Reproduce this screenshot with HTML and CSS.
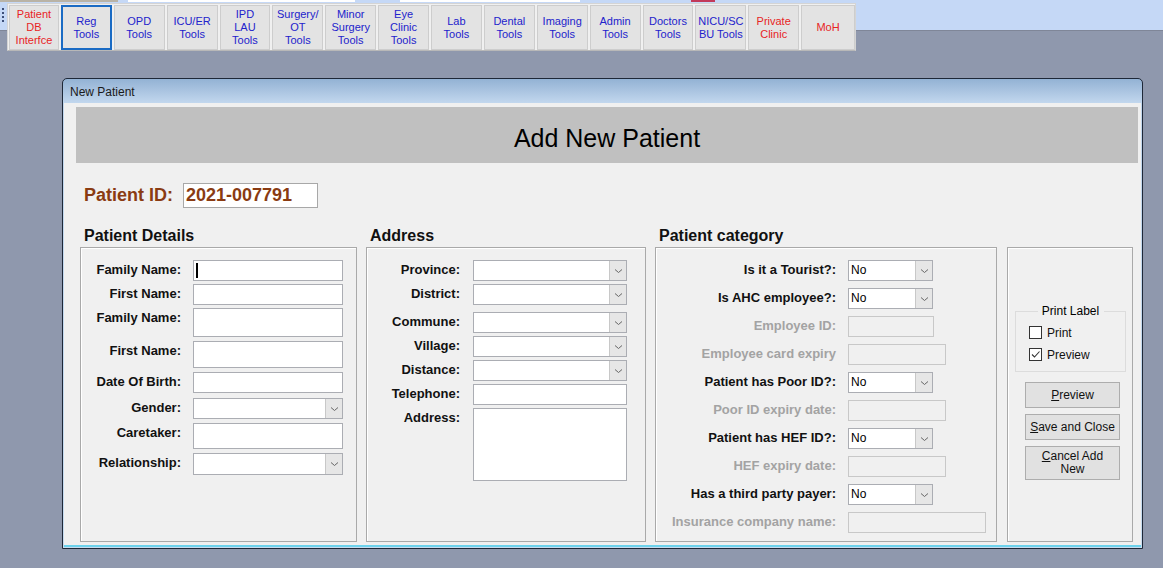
FILE: index.html
```html
<!DOCTYPE html>
<html>
<head>
<meta charset="utf-8">
<link rel="stylesheet" href="styles.css">
</head>
<body>
<div class="topbar">
  <div class="stubs">
    <span class="stub stub-a"></span>
    <span class="stub stub-b"></span>
    <span class="stub stub-c"></span>
    <span class="stub stub-d"></span>
  </div>
  <div class="grip"></div>
  <div class="toolbar">
    <div class="tbtn red first">Patient<br>DB<br>Interfce</div>
    <div class="tbtn tsel">Reg<br>Tools</div>
    <div class="tbtn">OPD<br>Tools</div>
    <div class="tbtn">ICU/ER<br>Tools</div>
    <div class="tbtn">IPD<br>LAU<br>Tools</div>
    <div class="tbtn">Surgery/<br>OT<br>Tools</div>
    <div class="tbtn">Minor<br>Surgery<br>Tools</div>
    <div class="tbtn">Eye<br>Clinic<br>Tools</div>
    <div class="tbtn">Lab<br>Tools</div>
    <div class="tbtn">Dental<br>Tools</div>
    <div class="tbtn">Imaging<br>Tools</div>
    <div class="tbtn">Admin<br>Tools</div>
    <div class="tbtn">Doctors<br>Tools</div>
    <div class="tbtn">NICU/SC<br>BU Tools</div>
    <div class="tbtn red">Private<br>Clinic</div>
    <div class="tbtn red last">MoH</div>
  </div>
</div>
<div class="desk">
  <div class="window">
    <div class="titlebar">New Patient</div>
    <div class="client">
      <div class="banner">Add New Patient</div>
      <div class="idrow">
        <span class="idlabel">Patient ID:</span>
        <div class="idbox">2021-007791</div>
      </div>
      <div class="sections">
        <div class="col c1">
          <h2>Patient Details</h2>
          <div class="group g1">
            <div class="row"><label>Family Name:</label><div class="inp h21 w149"><span class="caret"></span></div></div>
            <div class="row m3"><label>First Name:</label><div class="inp h21 w149"></div></div>
            <div class="row m3"><label>Family Name:</label><div class="inp h29 w149"></div></div>
            <div class="row m4"><label>First Name:</label><div class="inp h27 w149"></div></div>
            <div class="row m4"><label>Date Of Birth:</label><div class="inp h21 w149"></div></div>
            <div class="row m5"><label>Gender:</label><div class="inp sel h21 w149"><span class="dd"><svg width="9" height="6" viewBox="0 0 9 6"><path d="M1 1.5 L4.5 4.5 L8 1.5" fill="none" stroke="#666" stroke-width="1"/></svg></span></div></div>
            <div class="row m4"><label>Caretaker:</label><div class="inp h26 w149"></div></div>
            <div class="row m4"><label>Relationship:</label><div class="inp sel h22 w149"><span class="dd"><svg width="9" height="6" viewBox="0 0 9 6"><path d="M1 1.5 L4.5 4.5 L8 1.5" fill="none" stroke="#666" stroke-width="1"/></svg></span></div></div>
          </div>
        </div>
        <div class="col c2">
          <h2>Address</h2>
          <div class="group g2">
            <div class="row"><label>Province:</label><div class="inp sel h21 w153"><span class="dd"><svg width="9" height="6" viewBox="0 0 9 6"><path d="M1 1.5 L4.5 4.5 L8 1.5" fill="none" stroke="#666" stroke-width="1"/></svg></span></div></div>
            <div class="row m3"><label>District:</label><div class="inp sel h21 w153"><span class="dd"><svg width="9" height="6" viewBox="0 0 9 6"><path d="M1 1.5 L4.5 4.5 L8 1.5" fill="none" stroke="#666" stroke-width="1"/></svg></span></div></div>
            <div class="row m7"><label>Commune:</label><div class="inp sel h21 w153"><span class="dd"><svg width="9" height="6" viewBox="0 0 9 6"><path d="M1 1.5 L4.5 4.5 L8 1.5" fill="none" stroke="#666" stroke-width="1"/></svg></span></div></div>
            <div class="row m3"><label>Village:</label><div class="inp sel h21 w153"><span class="dd"><svg width="9" height="6" viewBox="0 0 9 6"><path d="M1 1.5 L4.5 4.5 L8 1.5" fill="none" stroke="#666" stroke-width="1"/></svg></span></div></div>
            <div class="row m3"><label>Distance:</label><div class="inp sel h21 w153"><span class="dd"><svg width="9" height="6" viewBox="0 0 9 6"><path d="M1 1.5 L4.5 4.5 L8 1.5" fill="none" stroke="#666" stroke-width="1"/></svg></span></div></div>
            <div class="row m3"><label>Telephone:</label><div class="inp h21 w153"></div></div>
            <div class="row m3"><label>Address:</label><div class="inp h73 w153"></div></div>
          </div>
        </div>
        <div class="col c3">
          <h2>Patient category</h2>
          <div class="group g3">
            <div class="row"><label>Is it a Tourist?:</label><div class="inp sel h21 w84"><span class="val">No</span><span class="dd"><svg width="9" height="6" viewBox="0 0 9 6"><path d="M1 1.5 L4.5 4.5 L8 1.5" fill="none" stroke="#666" stroke-width="1"/></svg></span></div></div>
            <div class="row m7"><label>Is AHC employee?:</label><div class="inp sel h21 w84"><span class="val">No</span><span class="dd"><svg width="9" height="6" viewBox="0 0 9 6"><path d="M1 1.5 L4.5 4.5 L8 1.5" fill="none" stroke="#666" stroke-width="1"/></svg></span></div></div>
            <div class="row m7 off"><label>Employee ID:</label><div class="inp dis h21 w85"></div></div>
            <div class="row m7 off"><label>Employee card expiry</label><div class="inp dis h21 w97"></div></div>
            <div class="row m7"><label>Patient has Poor ID?:</label><div class="inp sel h21 w84"><span class="val">No</span><span class="dd"><svg width="9" height="6" viewBox="0 0 9 6"><path d="M1 1.5 L4.5 4.5 L8 1.5" fill="none" stroke="#666" stroke-width="1"/></svg></span></div></div>
            <div class="row m7 off"><label>Poor ID expiry date:</label><div class="inp dis h21 w97"></div></div>
            <div class="row m7"><label>Patient has HEF ID?:</label><div class="inp sel h21 w84"><span class="val">No</span><span class="dd"><svg width="9" height="6" viewBox="0 0 9 6"><path d="M1 1.5 L4.5 4.5 L8 1.5" fill="none" stroke="#666" stroke-width="1"/></svg></span></div></div>
            <div class="row m7 off"><label>HEF expiry date:</label><div class="inp dis h21 w97"></div></div>
            <div class="row m7"><label>Has a third party payer:</label><div class="inp sel h21 w84"><span class="val">No</span><span class="dd"><svg width="9" height="6" viewBox="0 0 9 6"><path d="M1 1.5 L4.5 4.5 L8 1.5" fill="none" stroke="#666" stroke-width="1"/></svg></span></div></div>
            <div class="row m7 off"><label>Insurance company name:</label><div class="inp dis h21 w137"></div></div>
          </div>
        </div>
        <div class="col c4">
          <h2>&nbsp;</h2>
          <div class="group g4">
            <div class="fieldset">
              <div class="legend">Print Label</div>
              <div class="chk"><span class="box"></span>Print</div>
              <div class="chk"><span class="box"><svg width="11" height="11" viewBox="0 0 11 11"><path d="M2 5.5 L4.5 8 L9.5 2.5" fill="none" stroke="#333" stroke-width="1.1"/></svg></span>Preview</div>
            </div>
            <div class="btn b26"><u>P</u>review</div>
            <div class="btn b26"><u>S</u>ave and Close</div>
            <div class="btn b34"><span><u>C</u>ancel Add<br>New</span></div>
          </div>
        </div>
      </div>
    </div>
  </div>
</div>
</body>
</html>
```
FILE: styles.css
```css
* { box-sizing: border-box; }
html, body { margin: 0; padding: 0; }
body {
  width: 1163px;
  height: 568px;
  overflow: hidden;
  background: #8f98ad;
  font-family: "Liberation Sans", Arial, sans-serif;
}
.topbar {
  position: relative;
  height: 31px;
  background: #c5d8f6;
  border-bottom: 1px solid #7f8698;
}
.stubs { display: flex; height: 2px; }
.stub { display: block; height: 2px; }
.stub-a { width: 118px; background: #b9b3a6; }
.stub-b { width: 227px; margin-left: 10px; background: #fff; }
.stub-c { width: 180px; margin-left: 45px; background: #fff; }
.stub-d { width: 24px; margin-left: 111px; background: #c23a5a; }
.grip {
  position: absolute;
  left: 2px; top: 8px;
  width: 2px; height: 16px;
  background: repeating-linear-gradient(#3d4f78 0 2px, transparent 2px 4px);
}
.toolbar {
  position: absolute;
  left: 7px; top: 3px;
  width: 849px; height: 48px;
  background: #f0f0f0;
  border: 1px solid #d4d4d4;
  border-bottom-color: #b8b8b8;
  display: flex;
  gap: 2px;
  padding: 1px 0 0 1px;
}
.tbtn {
  width: 51px;
  height: 45px;
  background: #e3e3e3;
  border: 1px solid #cdcdcd;
  color: #2222cc;
  font-size: 11px;
  line-height: 13px;
  text-align: center;
  display: flex;
  align-items: center;
  justify-content: center;
}
.tbtn.first { width: 50px; }
.tbtn.last { width: 54px; }
.tbtn.red { color: #e8231f; }
.tbtn.tsel { border: 2px solid #1a6bc4; }

.desk { padding: 47px 0 0 62px; }
.window {
  width: 1081px;
  height: 471px;
  border: 1px solid #1e2838;
  border-radius: 5px 5px 0 0;
  background: linear-gradient(#93b2d4, #c2d7ee 24px, #c7dcf0);
  padding: 0 1px 1px 1px;
  display: flex;
  flex-direction: column;
}
.titlebar {
  height: 24px;
  font-size: 12px;
  line-height: 26px;
  padding-left: 6px;
  color: #1a1a1a;
}
.client {
  flex: 1;
  background: #f0f0f0;
  border-bottom: 2px solid #6cd2ec;
  padding: 4px 0 0 12px;
}
.banner {
  width: 1062px;
  height: 56px;
  background: #c0c0c0;
  font-size: 25px;
  color: #000;
  text-align: center;
  padding-top: 18px;
  line-height: 26px;
}
.idrow {
  display: flex;
  align-items: center;
  margin-top: 20px;
  padding-left: 8px;
  height: 25px;
}
.idlabel {
  width: 99px;
  font-weight: bold;
  font-size: 18px;
  color: #8a3b12;
}
.idbox {
  width: 135px;
  height: 25px;
  background: #fff;
  border: 1px solid #a8a8a8;
  font-weight: bold;
  font-size: 18px;
  color: #8a3b12;
  padding-left: 2px;
  line-height: 23px;
}
.sections {
  display: flex;
  margin-top: 17px;
  margin-left: 4px;
}
.col { display: flex; flex-direction: column; }
.c1 { width: 277px; margin-right: 9px; }
.c2 { width: 280px; margin-right: 9px; }
.c3 { width: 342px; margin-right: 10px; }
.c4 { width: 126px; }
h2 {
  margin: 0 0 1px 4px;
  height: 21px;
  font-size: 16px;
  line-height: 21px;
  font-weight: bold;
  color: #111;
}
.group {
  height: 295px;
  border: 1px solid #a9a9a9;
  box-shadow: inset 1px 1px 0 #fff;
  padding-top: 12px;
}
.row { display: flex; align-items: flex-start; }
.m3 { margin-top: 3px; }
.m4 { margin-top: 4px; }
.m5 { margin-top: 5px; }
.m7 { margin-top: 7px; }
label {
  font-weight: bold;
  font-size: 13px;
  line-height: 16px;
  padding-top: 2px;
  text-align: right;
  color: #111;
  white-space: nowrap;
}
.g1 label { width: 100px; margin-right: 12px; }
.g2 label { width: 93px; margin-right: 13px; }
.g3 label { width: 180px; margin-right: 12px; }
.off label { color: #a3a3a3; }
.inp {
  position: relative;
  background: #fff;
  border: 1px solid #abadb3;
}
.inp.dis { background: #f0f0f0; border-color: #c8c8c8; }
.h21 { height: 21px; }
.h22 { height: 22px; }
.h26 { height: 26px; }
.h27 { height: 27px; }
.h29 { height: 29px; }
.h73 { height: 73px; }
.w84 { width: 85px; }
.w85 { width: 86px; }
.w97 { width: 98px; }
.w137 { width: 138px; }
.w149 { width: 150px; }
.w153 { width: 154px; }
.caret {
  position: absolute;
  left: 2px; top: 2px;
  width: 2px; height: 15px;
  background: #000;
}
.sel { display: flex; justify-content: space-between; }
.val {
  font-size: 12px;
  line-height: 19px;
  padding-left: 2px;
  color: #000;
}
.dd {
  margin-left: auto;
  width: 17px;
  height: 100%;
  background: #e6e6e6;
  border-left: 1px solid #c8c8c8;
  display: flex;
  align-items: center;
  justify-content: center;
}
.g4 { padding-top: 63px; }
.fieldset {
  position: relative;
  margin-left: 7px;
  width: 111px;
  height: 61px;
  border: 1px solid #dcdcdc;
  padding: 14px 0 0 13px;
}
.legend {
  position: absolute;
  top: -8px; left: 0; right: 0;
  margin: 0 auto;
  width: 66px;
  background: #f0f0f0;
  text-align: center;
  font-size: 12px;
  line-height: 14px;
}
.chk {
  display: flex;
  align-items: center;
  font-size: 12px;
  line-height: 14px;
  height: 13px;
  margin-bottom: 9px;
  color: #111;
}
.box {
  width: 13px; height: 13px;
  background: #fff;
  border: 1px solid #333;
  margin-right: 5px;
  display: flex;
  align-items: center;
  justify-content: center;
}
.btn {
  margin: 9px 0 0 17px;
  width: 95px;
  background: #e1e1e1;
  border: 1px solid #adadad;
  font-size: 12px;
  line-height: 13px;
  text-align: center;
  display: flex;
  align-items: center;
  justify-content: center;
  color: #111;
}
.fieldset + .btn { margin-top: 10px; }
.b26 { height: 26px; margin-top: 6px; }
.b34 { height: 34px; margin-top: 6px; }
```
